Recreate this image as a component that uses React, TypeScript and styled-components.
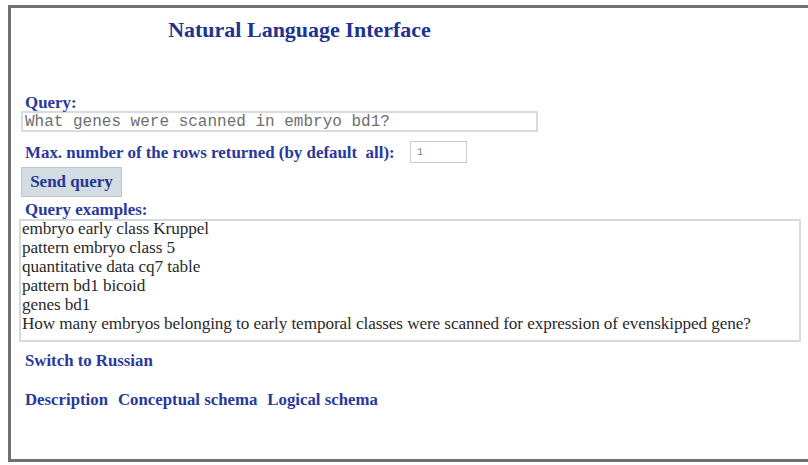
import React from 'react'
import styled, { createGlobalStyle } from 'styled-components'

const GlobalStyle = createGlobalStyle`
  html, body {
    margin: 0;
    padding: 0;
    background: #ffffff;
  }
  body {
    font-family: "Liberation Serif", "Times New Roman", serif;
    overflow: hidden;
  }
`

const Frame = styled.div`
  box-sizing: border-box;
  margin: 5px 0 0 8px;
  width: 820px;
  height: 457px;
  border: 3px solid #707070;
  border-right: none;
  padding: 0 0 0 14px;
`

const TitleBar = styled.div`
  width: 549px;
  text-align: center;
  padding-top: 9px;
`

const Title = styled.h1`
  margin: 0;
  font-size: 22px;
  font-weight: bold;
  color: #1e3290;
  line-height: 26px;
`

const Label = styled.div<{ top?: number }>`
  margin-top: ${({ top }) => top ?? 0}px;
  font-size: 16.9px;
  font-weight: bold;
  color: #27399a;
  line-height: 17px;
  white-space: nowrap;
`

const QueryInput = styled.input`
  box-sizing: border-box;
  display: block;
  width: 517px;
  height: 21px;
  margin: 0 0 0 -4px;
  padding: 0 2px;
  border: 2px solid #d8dcde;
  font-family: "Liberation Mono", "Courier New", monospace;
  font-size: 16px;
  color: #6e6e6e;
  background: #fff;
`

const Row = styled.div`
  display: flex;
  align-items: center;
  margin-top: 9px;
  gap: 15px;
`

const SmallInput = styled.input`
  box-sizing: border-box;
  width: 57px;
  height: 22px;
  padding: 0 6px;
  border: 1px solid #c9cccf;
  font-family: "Liberation Mono", "Courier New", monospace;
  font-size: 11px;
  color: #888;
`

const SendButton = styled.button`
  display: block;
  box-sizing: border-box;
  margin: 4px 0 0 -4px;
  width: 101px;
  height: 30px;
  background: #d2dce2;
  border: 1px solid #bcc6cc;
  font-family: "Liberation Serif", "Times New Roman", serif;
  font-size: 17px;
  font-weight: bold;
  color: #25378f;
  padding: 0;
`

const Examples = styled.div`
  box-sizing: border-box;
  margin: 1px 0 0 -6px;
  width: 782px;
  height: 123px;
  border: 2px solid #d6dadc;
  padding: 0 0 0 1px;
  font-size: 17.2px;
  line-height: 19px;
  color: #2a2a2a;
  letter-spacing: -0.1px;
  white-space: nowrap;
`

const ExampleLine = styled.div`
  margin-top: -2px;
  & + & {
    margin-top: 0;
  }
`

const Links = styled.div<{ top: number }>`
  display: flex;
  gap: 10px;
  margin-top: ${({ top }) => top}px;
`

const LinkText = styled.a`
  font-size: 16.8px;
  font-weight: bold;
  color: #27399a;
  text-decoration: none;
  line-height: 17px;
  cursor: pointer;
`

const examples = [
  'embryo early class Kruppel',
  'pattern embryo class 5',
  'quantitative data cq7 table',
  'pattern bd1 bicoid',
  'genes bd1',
  'How many embryos belonging to early temporal classes were scanned for expression of evenskipped gene?',
]

export default function App() {
  return (
    <>
      <GlobalStyle />
      <Frame>
        <TitleBar>
          <Title>Natural Language Interface</Title>
        </TitleBar>
        <Label top={51}>Query:</Label>
        <QueryInput defaultValue="What genes were scanned in embryo bd1?" />
        <Row>
          <Label>Max. number of the rows returned (by default&nbsp; all):</Label>
          <SmallInput defaultValue="1" />
        </Row>
        <SendButton>Send query</SendButton>
        <Label top={4}>Query examples:</Label>
        <Examples>
          {examples.map((e) => (
            <ExampleLine key={e}>{e}</ExampleLine>
          ))}
        </Examples>
        <Links top={10}>
          <LinkText>Switch to Russian</LinkText>
        </Links>
        <Links top={22}>
          <LinkText>Description</LinkText>
          <LinkText>Conceptual schema</LinkText>
          <LinkText>Logical schema</LinkText>
        </Links>
      </Frame>
    </>
  )
}
